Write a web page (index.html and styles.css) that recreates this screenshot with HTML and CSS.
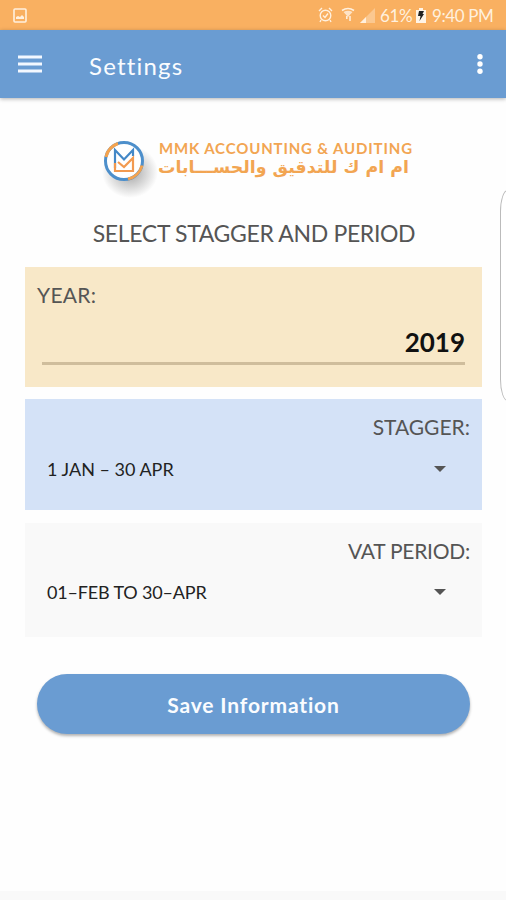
FILE: index.html
```html
<!DOCTYPE html>
<html lang="en">
<head>
<meta charset="utf-8">
<title>Settings</title>
<link rel="stylesheet" href="styles.css">
</head>
<body>
<div class="status">
  <svg class="shot" width="14" height="15" viewBox="0 0 14 15"><rect x="1" y="1" width="12" height="13" rx="1" fill="none" stroke="currentColor" stroke-width="1.6"/><path d="M3 11V9l2-1 2 1 2-2 2 2v2z" fill="currentColor"/></svg>
  <svg class="alarm" width="15" height="16" viewBox="0 0 15 16" fill="none" stroke="currentColor" stroke-width="1.4"><circle cx="7.5" cy="8.5" r="5.3"/><path d="M1 4l3-3M11 1l3 3M3 13l-1 2M12 13l1 2M5 8.5l2 2 3-4"/></svg>
  <svg class="wifi" width="14" height="16" viewBox="0 0 14 16" fill="none" stroke="currentColor" stroke-width="1.6"><path d="M1 3.500Q7-.5 13 3.500"/><path d="M2.500 5q4.500-2.500 9 0L7 10z" fill="currentColor" stroke="none" opacity=".8"/><path d="M5.800 9v3M9 9v5" stroke-width="1.500"/></svg>
  <svg class="signal" width="15" height="15" viewBox="0 0 15 15"><path d="M0 15L15 0v15z" fill="currentColor" opacity=".38"/><path d="M0 15l6-6v6z" fill="currentColor"/></svg>
  <span class="percent">61%</span>
  <svg class="battery" width="10" height="15" viewBox="0 0 10 15"><path d="M0 2h3V0h4v2h3v13H0z" fill="#fff4e6"/><path d="M3 3h5L6.500 6H8l-4.500 7 1-5H2z" fill="#222"/></svg>
  <span class="clock">9:40 PM</span>
</div>
<header class="appbar">
  <svg width="24" height="18" viewBox="0 0 24 18"><path d="M0 2h24M0 9h24M0 16h24" stroke="#f3f8ff" stroke-width="3"/></svg>
  <h1>Settings</h1>
  <svg class="more" width="6" height="20" viewBox="0 0 6 20" fill="#fff"><circle cx="3" cy="2.700" r="2.700"/><circle cx="3" cy="10" r="2.700"/><circle cx="3" cy="17.300" r="2.700"/></svg>
</header>
<main>
  <div class="brand">
    <svg class="mark" width="70" height="70" viewBox="0 0 70 70" fill="none">
      <defs><radialGradient id="shade"><stop offset=".3" stop-color="#555" stop-opacity=".38"/><stop offset="1" stop-color="#555" stop-opacity="0"/></radialGradient></defs>
      <ellipse cx="35" cy="42" rx="28" ry="26" fill="url(#shade)"/>
      <circle cx="29" cy="31" r="18.500" fill="#fff" stroke="#4d8fcb" stroke-width="3"/>
      <path d="M11 27A18.500 18.500 0 0 1 23 13.500M47 35.500A18.500 18.500 0 0 1 33 49" stroke="#f5a34e" stroke-width="3"/>
      <path d="M20 38V20l9 9.500 9-9.500v6" stroke="#4388c7" stroke-width="2.200"/>
      <path d="M20 33v8h18V28l-9 9-6-5" stroke="#f29a50" stroke-width="2.200"/>
    </svg>
    <div class="names"><div class="en">MMK ACCOUNTING &amp; AUDITING</div><div class="ar" dir="rtl" lang="ar">ام ام ك للتدقيق والحســـابات</div></div>
  </div>
  <h2>SELECT STAGGER AND PERIOD</h2>
  <section class="card year"><label>YEAR:</label><div class="value">2019</div></section>
  <section class="card stagger"><label>STAGGER:</label><div class="select"><span>1 JAN – 30 APR</span><i></i></div></section>
  <section class="card period"><label>VAT PERIOD:</label><div class="select"><span>01–FEB TO 30–APR</span><i></i></div></section>
  <button>Save Information</button>
</main>
<div class="edge"></div>
<footer></footer>
</body>
</html>
```
FILE: styles.css
```css
* { box-sizing: border-box; }
body { margin: 0; height: 900px; overflow: hidden; display: flex; flex-direction: column; background: #fefefe; font-family: Lato, sans-serif; color: #555; }
.status { height: 30px; flex: none; background: #f9b061; color: #fff0de; display: flex; align-items: center; padding: 0 12px 0 13px; font-size: 17px; white-space: nowrap; }
.alarm { margin-left: auto; }
.wifi { margin-left: 8px; }
.signal { margin-left: 5px; }
.percent { width: 32px; margin-left: 5px; letter-spacing: -.3px; }
.battery { margin-left: 4px; }
.clock { width: 62px; margin-left: 6px; letter-spacing: -.4px; }
.appbar { height: 68px; flex: none; display: flex; align-items: center; padding: 0 23px 0 18px; background: #6a9cd2; color: #fafcff; box-shadow: 0 1px 4px rgba(0,0,0,.3); }
h1 { margin: 3px auto 0 47px; font-size: 24px; line-height: 30px; font-weight: 400; letter-spacing: 1.2px; }
main { flex: 1; padding: 0 24px 0 25px; }
.brand { height: 112px; display: flex; padding: 32px 0 0 70px; }
.mark { flex: none; }
.names { margin: 9px 0 0 -6px; color: #f2a552; width: 254px; white-space: nowrap; }
.en { font-size: 15px; line-height: 18px; font-weight: 700; letter-spacing: .85px; }
.ar { font: bold 17.4px/20px "DejaVu Sans", sans-serif; width: 250px; }
h2 { margin: 10px 0 0 1px; height: 47px; text-align: center; font-size: 23px; line-height: 27px; font-weight: 400; letter-spacing: -.34px; white-space: nowrap; }
.card { padding: 15px 12px 0; display: flex; flex-direction: column; }
label { font-size: 21px; line-height: 25px; }
.year { height: 120px; background: #f8e8c8; margin-bottom: 12px; }
.year label { letter-spacing: .3px; }
.value { margin: 15px 5px 0; height: 43px; border-bottom: 3px solid #cfbd9c; color: #111; text-align: right; font-size: 26px; line-height: 40px; font-weight: 700; }
.stagger { height: 111px; background: #d4e2f7; margin-bottom: 13px; }
.period { height: 114px; background: #f9f9f9; }
.stagger label, .period label { align-self: flex-end; }
.period label { letter-spacing: -.25px; }
.select { display: flex; align-items: center; justify-content: space-between; margin: 18px 24px 0 10px; line-height: 24px; font-size: 18px; color: #222; }
.period .select { margin-top: 17px; letter-spacing: -.17px; }
i { border: 6px solid transparent; border-top-color: #555; border-bottom: 0; }
button { display: block; margin: 37px 12px 0; padding: 0; width: 433px; height: 60px; border: 0; border-radius: 30px; background: #6a9cd2; color: #fafcff; font: 700 21px Lato, sans-serif; letter-spacing: .85px; box-shadow: 0 2px 3px rgba(0,0,0,.3); }
.edge { position: absolute; right: -9px; top: 190px; width: 15px; height: 211px; border: 1px solid #bbb; border-radius: 12px / 35px; background: #fff; }
footer { height: 9px; flex: none; background: #f9f9f9; }
```
